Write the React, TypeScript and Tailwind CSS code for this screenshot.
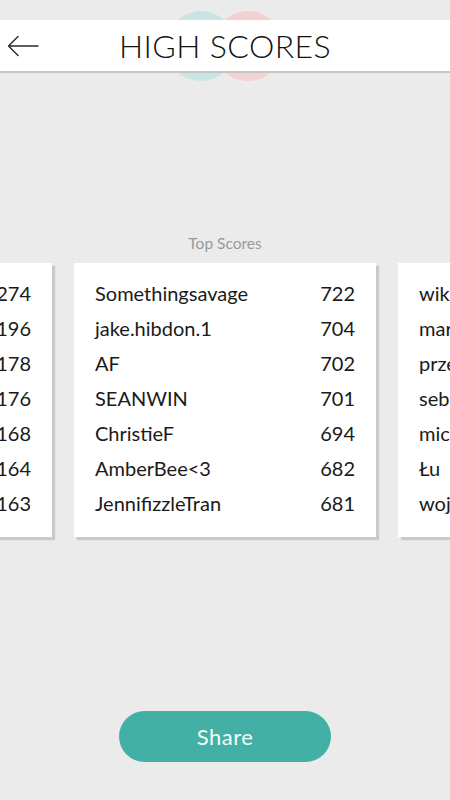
import React from "react";

type Row = { name: string; score: number };

const leftRows: Row[] = [
  { name: "", score: 274 },
  { name: "", score: 196 },
  { name: "", score: 178 },
  { name: "", score: 176 },
  { name: "", score: 168 },
  { name: "", score: 164 },
  { name: "", score: 163 },
];

const centerRows: Row[] = [
  { name: "Somethingsavage", score: 722 },
  { name: "jake.hibdon.1", score: 704 },
  { name: "AF", score: 702 },
  { name: "SEANWIN", score: 701 },
  { name: "ChristieF", score: 694 },
  { name: "AmberBee<3", score: 682 },
  { name: "JennifizzleTran", score: 681 },
];

const rightRows: Row[] = [
  { name: "wiktor", score: 512 },
  { name: "marcin", score: 498 },
  { name: "przemek", score: 470 },
  { name: "sebastian", score: 455 },
  { name: "michal", score: 431 },
  { name: "Łu", score: 420 },
  { name: "wojtek", score: 402 },
];

function Card({ rows }: { rows: Row[] }) {
  return (
    <div className="w-[302px] h-[274px] shrink-0 bg-white shadow-[3px_3px_1px_#cacaca] px-[21px] pt-[13px]">
      {rows.map((r, i) => (
        <div
          key={i}
          className="flex items-center justify-between h-[35px] text-[20px] text-[#1a1a1a] leading-[35px] whitespace-nowrap"
        >
          <span>{r.name}</span>
          <span>{r.score}</span>
        </div>
      ))}
    </div>
  );
}

export default function App() {
  return (
    <div
      className="w-[450px] h-[800px] bg-[#ebebeb] overflow-hidden flex flex-col"
      style={{ fontFamily: "Lato, 'Noto Sans', sans-serif" }}
    >
      <div className="relative pt-[20px]">
        <div className="absolute left-[166px] top-[11px] w-[70px] h-[70px] rounded-full bg-[#c9e4e2]" />
        <div className="absolute left-[213px] top-[11px] w-[70px] h-[70px] rounded-full bg-[#f2d1d3]" />
        <div className="relative h-[51px] bg-white shadow-[0_2px_0_#c6c6c6] flex items-center justify-center">
          <div className="absolute left-[7px] top-[15px]">
            <svg width="32" height="22" viewBox="0 0 32 22" fill="none">
              <path
                d="M31 11H1.5M11 1.5L1.5 11L11 20.5"
                stroke="#2a2a2a"
                strokeWidth="1.4"
                strokeLinecap="round"
                strokeLinejoin="round"
              />
            </svg>
          </div>
          <div className="text-[32px] font-light tracking-[0.4px] text-[#111] leading-none">HIGH SCORES</div>
        </div>
      </div>

      <div className="mt-[162px] h-[20px] leading-[20px] text-center text-[15.5px] text-[#999999]">
        Top Scores
      </div>

      <div className="mt-[10px] flex justify-center gap-[22px]">
        <Card rows={leftRows} />
        <Card rows={centerRows} />
        <Card rows={rightRows} />
      </div>

      <div className="mt-[174px] flex justify-center">
        <button className="w-[212px] h-[51px] rounded-full bg-[#42b0a5] text-[#f4fbfa] text-[22px] tracking-[0.5px] leading-none">
          Share
        </button>
      </div>
    </div>
  );
}
